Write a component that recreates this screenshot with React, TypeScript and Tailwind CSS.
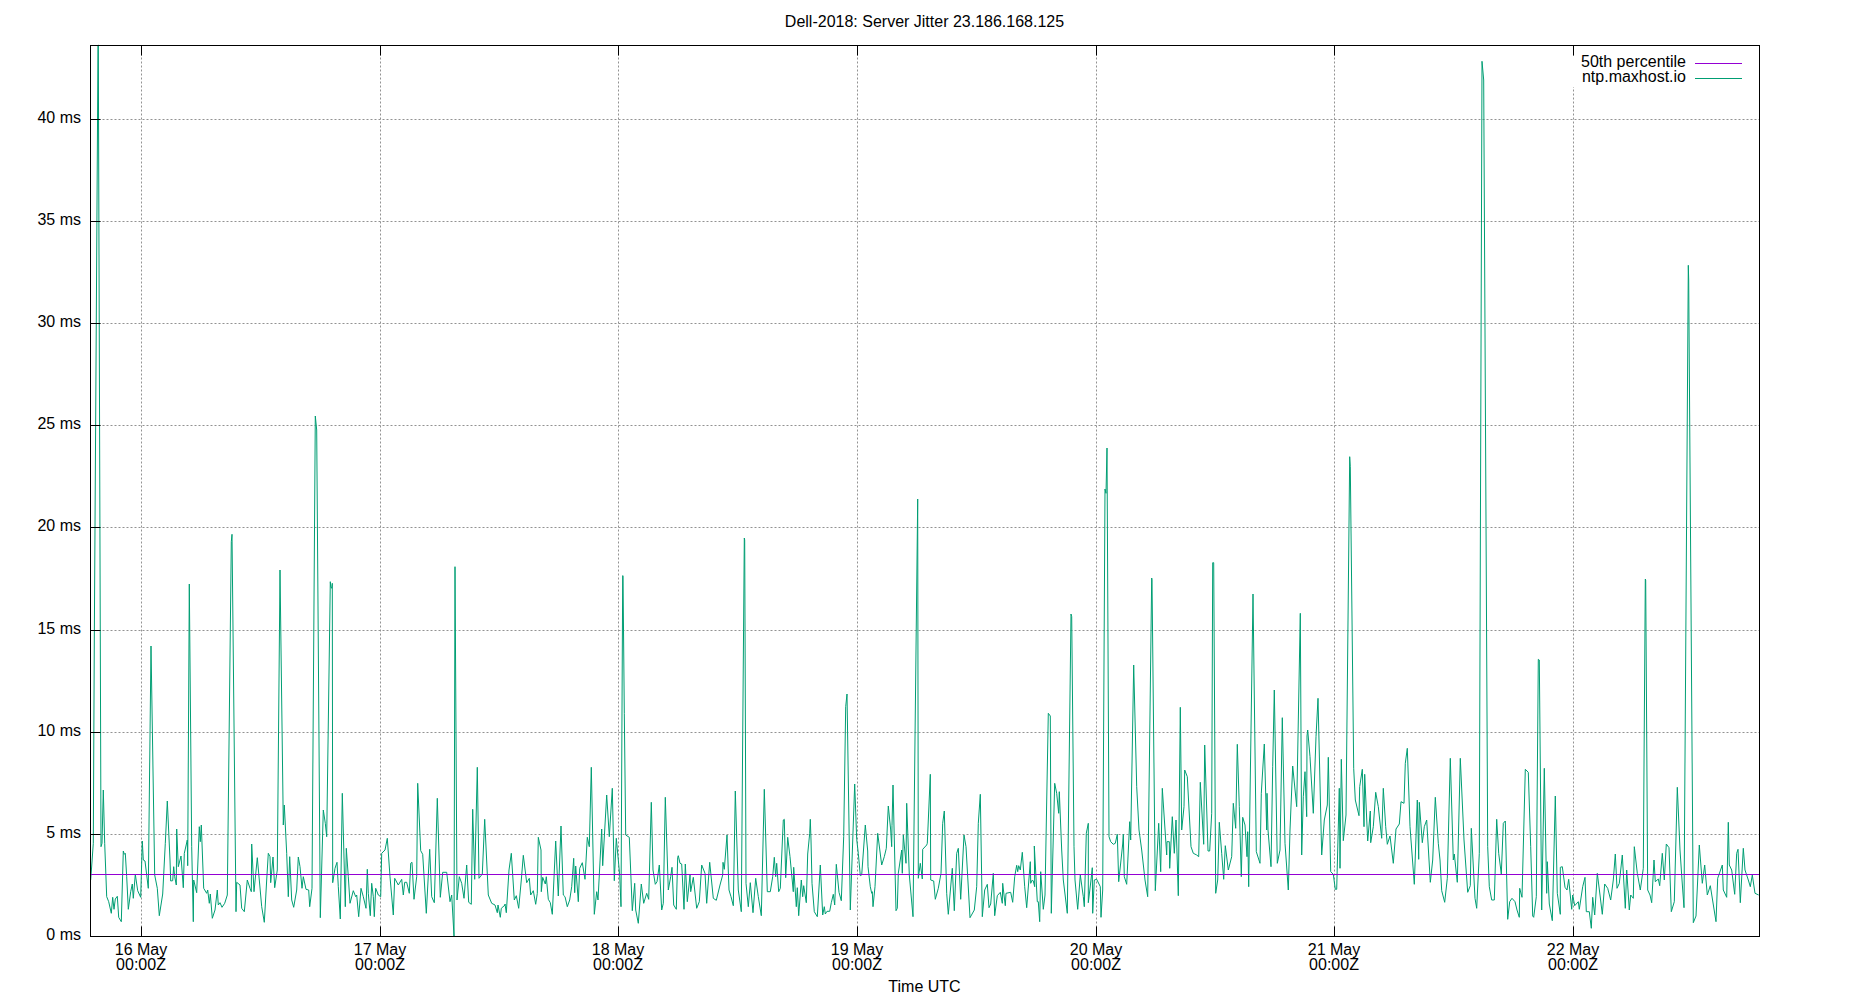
// Gnuplot style jitter chart. Series traced in 3x crop coordinates, one string per crop.
const crops: [number, number, string][] = [
  [90, 720, "2,480 10,370 13,-240 24,-2025 25,-2025 33,380 36,370 40,210 44,370 50,530 56,545 64,580 68,532 72,568 76,537 82,529 86,592 94,605 100,393 103,403 106,400 110,470 115,568 122,515 127,492 130,535 136,463 143,512 152,532 157,363 160,420 165,423 175,505 183,-222 194,465 202,505 208,587 218,522 226,370 232,243 240,420 242,483 248,482 251,440 254,470 259,495 260,327 265,440 273,408 280,503 283,400 292,360 293,437 298,-408 305,380 310,605 311,480 320,518 328,320 331,365 334,315 341,505 350,520 353,510 358,550 361,522 367,595 375,570 382,510 385,555 390,548 396,562 404,550 412,525 424,-535 426,-557 438,575 440,487 450,495 455,565 463,575 472,480 480,505 484,515 485,372 492,515 502,413 508,480 515,560 523,607 530,480 535,400 540,410 542,488 549,411 554,503 562,450 570,-450 580,315 583,255 590,400 595,530 599,410 605,540 611,562 620,510 625,411 630,440 636,505 640,470 648,508 656,510 659,560 666,505 676,-912 680,-870 691,593 700,270 706,310 710,350 721,-415 722,-400 725,-395 727,-410 728,488 735,445 741,427 745,500 751,597 757,220 766,560 769,385 775,470 780,550 790,512 797,530 800,525 806,590 813,505 820,530 828,565 832,448 835,520 841,587 845,490 850,530 853,590 857,505 865,525 872,530 875,400 885,390 892,355 900,470 910,585 914,475 925,495 935,478 940,525 944,487 950,487 958,520 962,430 966,427 972,538 980,470 983,190 992,392 998,403 1009,580 1019,388 1025,530 1033,548 1042,235 1051,532 1058,457 1070,457 1080,545 1085,525 1092,648 1095,-460 1101,540 1108,470 1115,490 1122,535 1130,435 1136,547 1144,553 1148,268 1154,478 1162,142 1167,475 1177,462 1184,298 1195,525 1205,550 1215,555 1222,578 1224,555 1231,592 1234,565 1245,555"],
  [505, 720, "0,552 4,578 12,450 19,400 28,540 34,527 41,565 49,480 55,406 65,488 73,475 77,525 85,512 92,553 97,520 100,352 108,390 109,515 113,472 121,492 124,470 130,538 136,548 142,583 152,363 160,528 168,318 175,525 180,530 187,560 194,540 200,500 206,415 209,518 212,438 220,545 224,445 232,428 240,478 247,352 253,380 259,142 268,583 275,515 279,540 290,327 293,437 305,225 313,350 322,205 328,482 334,355 344,465 348,560 353,-433 354,-433 358,-20 362,345 373,352 382,572 389,490 392,570 400,610 409,492 416,550 425,520 431,538 439,247 444,450 451,493 456,485 463,435 470,570 475,550 481,232 490,510 497,470 501,442 506,555 514,568 518,412 520,407 525,430 530,432 537,568 541,432 547,545 555,465 557,515 565,472 575,565 583,545 590,435 600,460 605,550 614,427 625,535 634,541 645,495 653,465 654,427 658,448 666,345 672,510 678,530 685,557 691,213 700,510 709,575 718,-546 719,-540 723,490 730,560 736,488 744,578 752,475 760,530 769,587 778,208 787,515 796,515 803,470 808,412 812,470 815,430 821,515 826,505 835,300 838,298 842,473 848,352 855,410 865,515 866,442 874,560 877,503 881,587 889,480 893,530 896,497 904,548 908,402 914,340 916,298 918,360 921,490 928,575 937,590 946,435 953,585 958,560 961,582 966,574 974,574 979,548 985,523 989,555 994,433 1002,517 1009,542 1016,350 1022,-40 1026,-78 1036,570 1049,192 1055,358 1060,400 1066,467 1070,465 1081,315 1088,393 1089,440 1096,500 1100,520 1102,515 1104,560 1110,500 1118,340 1130,435 1138,410 1144,385 1150,258 1157,330 1160,380 1161,316 1164,195 1173,572 1177,565 1180,460 1190,390 1192,460 1195,345 1203,430 1205,250 1213,465 1224,590 1238,-663 1240,475 1246,430"],
  [920, 680, "7,597 8,508 20,495 22,490 31,283 32,600 41,603 46,658 55,625 63,580 68,430 73,393 80,640 85,703 97,565 103,692 110,520 115,505 122,658 132,465 138,500 150,713 163,690 170,620 175,430 181,343 187,710 194,630 202,613 207,683 212,672 220,580 224,707 232,647 241,637 247,670 248,610 252,645 256,677 258,640 272,637 278,667 284,590 290,556 293,575 296,557 301,570 307,517 314,620 320,683 331,545 332,610 337,600 340,603 344,620 343,498 352,665 355,665 359,725 362,575 370,688 375,645 385,100 391,108 394,700 404,310 410,340 416,400 418,335 425,510 430,600 442,700 453,-198 455,-190 462,500 465,600 473,688 481,585 490,650 493,680 499,460 505,430 505,668 513,600 517,563 518,700 523,600 530,598 541,620 543,712 548,630 555,-573 558,-560 561,-696 567,470 572,485 580,493 586,490 592,463 596,605 603,540 608,492 610,463 613,590 620,613 629,425 632,480 641,-45 650,320 657,450 665,510 675,600 683,650 695,-306 696,-300 706,632 716,430 722,575 727,325 740,525 741,485 748,485 749,565 757,410 763,520 768,420 775,647 781,82 785,450 792,380 794,270 802,290 813,500 820,520 830,525 836,530 841,307 851,493 854,195 864,513 869,513 875,400 878,-352 881,-352 887,640 893,600 898,427 905,520 911,598 916,497 925,570 935,530 940,370 947,445 952,193 958,380 964,590 968,412 975,435 981,530 983,455 986,620 999,-258 1009,515 1020,550 1024,340 1033,192 1040,450 1041,340 1044,450 1053,560 1058,260 1063,30 1072,550 1080,510 1087,113 1095,490 1105,630 1110,450 1118,258 1130,380 1141,-200 1145,525 1150,350 1155,275 1160,410 1161,168 1163,150 1170,230 1180,400 1188,170 1194,55 1205,525 1213,420 1222,375 1225,232 1232,575 1240,583 1246,628 1250,628 1258,325"],
  [1340, 680, "0,565 4,238 10,482 18,405 29,-670 31,-640 41,265 46,360 57,407 59,320 67,268 72,440 74,283 83,483 91,393 92,488 100,440 107,337 115,380 125,475 130,325 137,440 142,493 150,468 160,550 168,447 178,432 183,365 192,370 196,250 202,205 210,440 223,613 232,360 236,538 238,367 247,488 253,440 260,420 271,607 278,540 286,352 295,490 300,540 305,632 314,667 322,595 331,235 340,540 343,522 352,607 361,235 372,480 383,637 391,617 394,445 405,655 410,685 418,520 426,-1856 431,-1800 443,500 448,620 455,660 463,660 470,418 476,520 484,582 490,430 496,423 503,718 509,665 516,655 525,665 531,690 538,712 539,625 546,652 556,268 565,277 572,500 578,708 581,712 589,650 595,-62 598,-60 605,690 613,265 620,640 622,545 628,672 637,722 646,348 652,640 661,703 661,562 667,560 675,622 681,630 686,598 695,688 698,645 704,677 715,665 718,688 728,620 735,592 739,695 748,695 754,745 758,652 764,705 772,580 780,645 787,703 794,612 803,625 812,660 820,600 826,522 831,625 838,610 847,525 856,685 860,570 868,690 872,645 880,655 883,500 892,580 901,630 910,565 916,-303 917,-300 923,630 930,645 935,668 942,540 946,605 955,597 959,617 967,520 973,600 979,492 987,503 994,695 1003,665 1012,322 1020,510 1026,600 1032,683 1045,-1244 1046,-1200 1060,728 1068,708 1078,495 1087,610 1094,555 1102,645 1111,617 1128,725 1133,595 1147,555 1150,630 1160,652 1165,427 1168,555 1175,570 1184,643 1190,520 1194,508 1201,668 1210,505 1215,570 1225,600 1231,620 1237,585 1245,640 1256,645"],
];

const series = crops
  .flatMap(([ox, oy, pts]) =>
    pts.split(" ").map((p) => {
      const [x, y] = p.split(",").map(Number);
      return `${(ox + x / 3).toFixed(1)},${(oy + y / 3).toFixed(1)}`;
    })
  )
  .join(" ");

const left = 90.5;
const right = 1759.5;
const top = 45.5;
const bottom = 936.5;

const yTicks: [string, number][] = [
  ["0 ms", 936.5],
  ["5 ms", 834.5],
  ["10 ms", 732.5],
  ["15 ms", 630.5],
  ["20 ms", 527.5],
  ["25 ms", 425.5],
  ["30 ms", 323.5],
  ["35 ms", 221.5],
  ["40 ms", 119.5],
];

const xTicks: [string, number][] = [
  ["16 May", 141.5],
  ["17 May", 380.5],
  ["18 May", 618.5],
  ["19 May", 857.5],
  ["20 May", 1096.5],
  ["21 May", 1334.5],
  ["22 May", 1573.5],
];

const grid = "#929292";

export default function App() {
  return (
    <div className="h-[1000px] w-[1850px] bg-white">
      <svg
        width={1850}
        height={1000}
        viewBox="0 0 1850 1000"
        className="block fill-black font-['Liberation_Sans',sans-serif] text-[16px]"
      >
        {/* grid */}
        {yTicks.slice(1).map(([label, y]) => (
          <line key={label} x1={left} x2={right} y1={y} y2={y} stroke={grid} strokeDasharray="2 2" />
        ))}
        {xTicks.map(([label, x]) => (
          <line key={label} x1={x} x2={x} y1={top} y2={bottom} stroke={grid} strokeDasharray="2 2" />
        ))}

        {/* legend box hides the grid */}
        <rect x={1566} y={56} width={186} height={31} className="fill-white" />

        {/* data */}
        <polyline points={series} fill="none" stroke="#009e73" strokeWidth={1} />
        <line x1={left} x2={right} y1={874.5} y2={874.5} stroke="#9400d3" />

        {/* ticks and border */}
        {yTicks.map(([label, y]) => (
          <line key={label} x1={left} x2={left + 10} y1={y} y2={y} stroke="black" />
        ))}
        {xTicks.map(([label, x]) => (
          <g key={label}>
            <line x1={x} x2={x} y1={top} y2={top + 10} stroke="black" />
            <line x1={x} x2={x} y1={bottom} y2={bottom - 10} stroke="black" />
          </g>
        ))}
        <rect x={left} y={top} width={right - left} height={bottom - top} fill="none" stroke="black" />

        {/* labels */}
        <text x={924.5} y={27} textAnchor="middle">
          Dell-2018: Server Jitter 23.186.168.125
        </text>
        {yTicks.map(([label, y]) => (
          <text key={label} x={81} y={y + 3.5} textAnchor="end">
            {label}
          </text>
        ))}
        {xTicks.map(([label, x]) => (
          <g key={label} textAnchor="middle">
            <text x={x - 0.5} y={955}>
              {label}
            </text>
            <text x={x - 0.5} y={970}>
              00:00Z
            </text>
          </g>
        ))}
        <text x={924.5} y={992} textAnchor="middle">
          Time UTC
        </text>

        {/* legend */}
        <text x={1686} y={67} textAnchor="end">
          50th percentile
        </text>
        <line x1={1695} x2={1742} y1={63.5} y2={63.5} stroke="#9400d3" />
        <text x={1686} y={82} textAnchor="end">
          ntp.maxhost.io
        </text>
        <line x1={1695} x2={1742} y1={78.5} y2={78.5} stroke="#009e73" />
      </svg>
    </div>
  );
}
